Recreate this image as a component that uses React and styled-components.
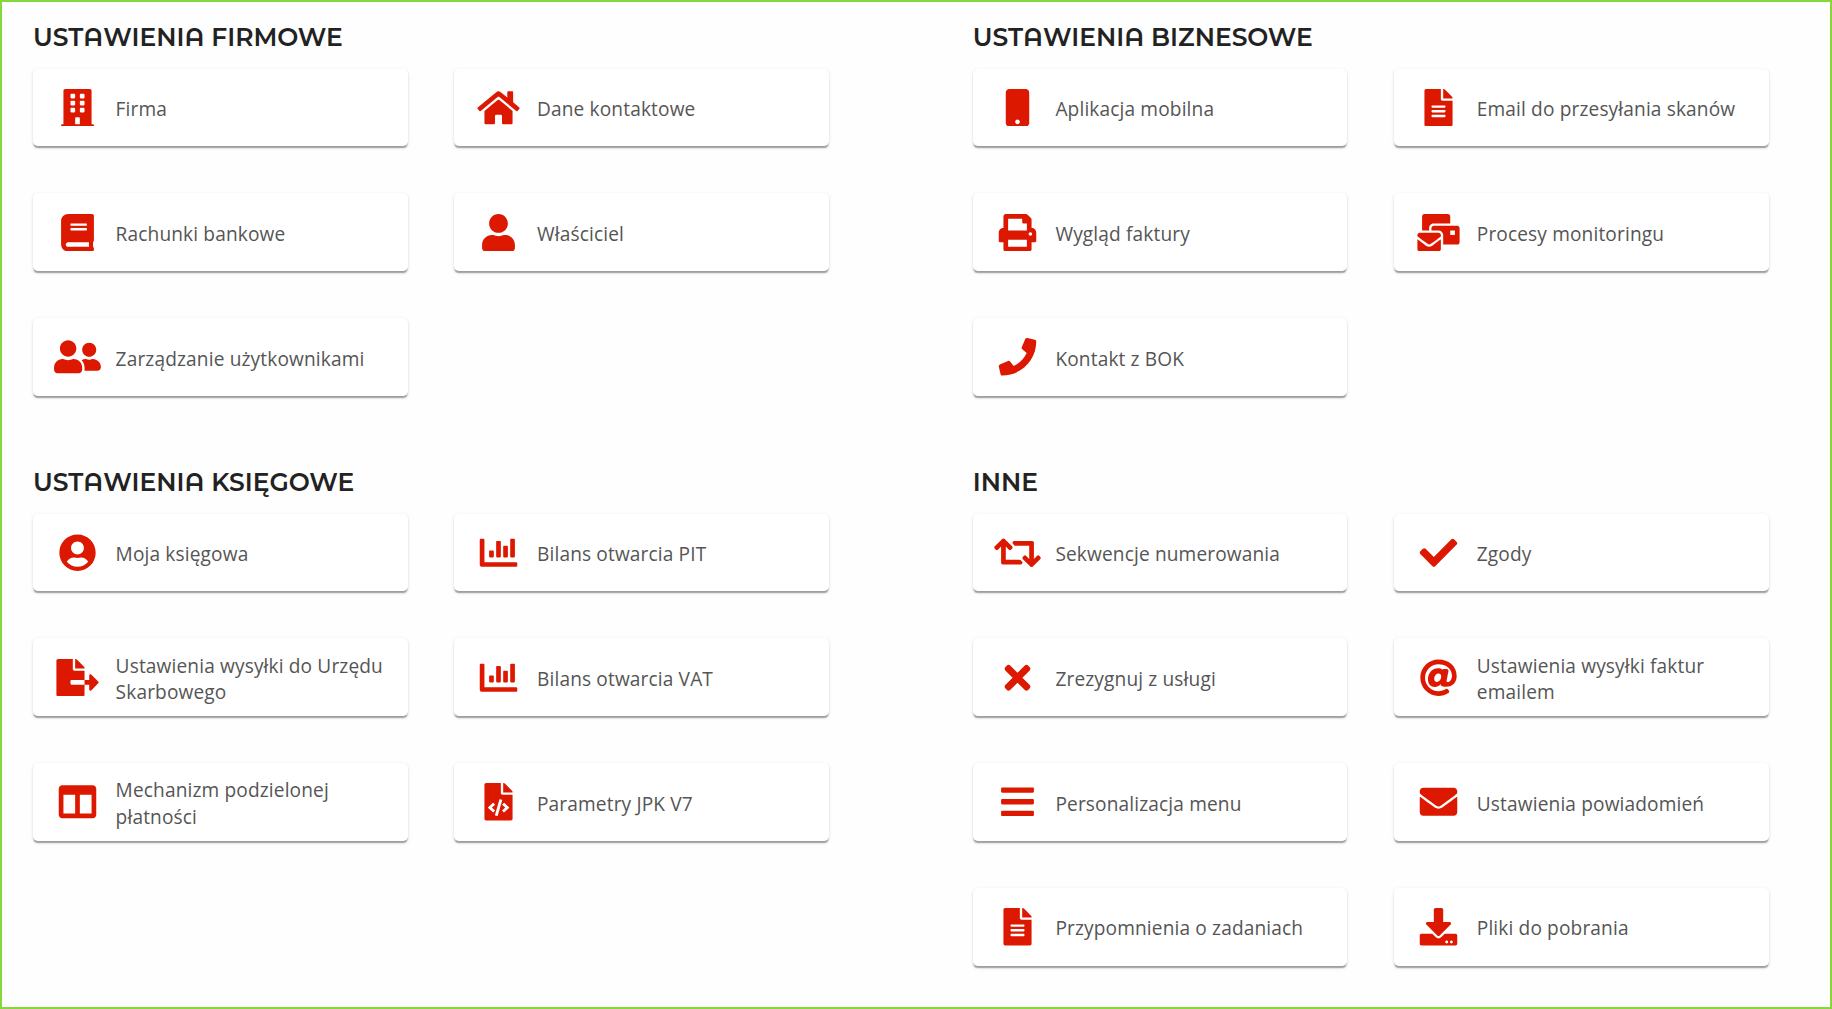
import { Fragment } from "react";
import styled, { createGlobalStyle } from "styled-components";
import {
  FaAt,
  FaBars,
  FaBook,
  FaBuilding,
  FaChartBar,
  FaCheck,
  FaColumns,
  FaDownload,
  FaEnvelope,
  FaFileAlt,
  FaFileCode,
  FaFileExport,
  FaHome,
  FaMailBulk,
  FaMobile,
  FaPhone,
  FaPrint,
  FaRetweet,
  FaTimes,
  FaUser,
  FaUserCircle,
  FaUserFriends,
} from "react-icons/fa";

const sections = [
  {
    title: "USTAWIENIA FIRMOWE",
    items: [
      { icon: FaBuilding, label: "Firma" },
      { icon: FaHome, label: "Dane kontaktowe" },
      { icon: FaBook, label: "Rachunki bankowe" },
      { icon: FaUser, label: "Właściciel" },
      { icon: FaUserFriends, label: "Zarządzanie użytkownikami" },
    ],
  },
  {
    title: "USTAWIENIA BIZNESOWE",
    items: [
      { icon: FaMobile, label: "Aplikacja mobilna" },
      { icon: FaFileAlt, label: "Email do przesyłania skanów" },
      { icon: FaPrint, label: "Wygląd faktury" },
      { icon: FaMailBulk, label: "Procesy monitoringu" },
      { icon: FaPhone, label: "Kontakt z BOK" },
    ],
  },
  {
    title: "USTAWIENIA KSIĘGOWE",
    items: [
      { icon: FaUserCircle, label: "Moja księgowa" },
      { icon: FaChartBar, label: "Bilans otwarcia PIT" },
      { icon: FaFileExport, label: "Ustawienia wysyłki do Urzędu Skarbowego" },
      { icon: FaChartBar, label: "Bilans otwarcia VAT" },
      { icon: FaColumns, label: "Mechanizm podzielonej płatności" },
      { icon: FaFileCode, label: "Parametry JPK V7" },
    ],
  },
  {
    title: "INNE",
    items: [
      { icon: FaRetweet, label: "Sekwencje numerowania" },
      { icon: FaCheck, label: "Zgody" },
      { icon: FaTimes, label: "Zrezygnuj z usługi" },
      { icon: FaAt, label: "Ustawienia wysyłki faktur emailem" },
      { icon: FaBars, label: "Personalizacja menu" },
      { icon: FaEnvelope, label: "Ustawienia powiadomień" },
      { icon: FaFileAlt, label: "Przypomnienia o zadaniach" },
      { icon: FaDownload, label: "Pliki do pobrania" },
    ],
  },
];

// the rounded A comes from the alternates cut
const SectionTitle = ({ text }) => (
  <Title>
    {text.split("A").map((part, i) => (
      <Fragment key={i}>
        {i > 0 && <AltLetter>A</AltLetter>}
        {part}
      </Fragment>
    ))}
  </Title>
);

const SettingsTile = ({ icon: Icon, label }) => (
  <Tile>
    <IconBox>
      <Icon />
    </IconBox>
    <Label>{label}</Label>
  </Tile>
);

export default function App() {
  return (
    <>
      <GlobalStyle />
      <Page>
        {sections.map((section) => (
          <section key={section.title}>
            <SectionTitle text={section.title} />
            <Tiles>
              {section.items.map((item) => (
                <SettingsTile key={item.label} {...item} />
              ))}
            </Tiles>
          </section>
        ))}
      </Page>
    </>
  );
}

const GlobalStyle = createGlobalStyle`
  * {
    box-sizing: border-box;
  }
  body {
    margin: 0;
    background: #fefefe;
    font-family: "Open Sans", "Noto Sans", sans-serif;
  }
`;

const Page = styled.main`
  display: grid;
  grid-template-columns: repeat(2, 796px);
  grid-template-rows: 445px auto;
  column-gap: 143.8px;
  align-content: start;
  height: 1009px;
  padding: 19px 0 0 31px;
  border: 2px solid #82d939;
  overflow: hidden;
`;

const Title = styled.h2`
  height: 33px;
  margin: 0 0 14.7px;
  color: #222;
  font-family: Montserrat, Lato, sans-serif;
  font-size: 25px;
  font-weight: 600;
  line-height: 33px;
  white-space: nowrap;
`;

const AltLetter = styled.span`
  font-family: "Montserrat Alternates", Montserrat, Lato, sans-serif;
`;

const Tiles = styled.div`
  display: grid;
  grid-template-columns: repeat(2, 374.6px);
  grid-auto-rows: 77.8px;
  gap: 47px 46.8px;
`;

const Tile = styled.div`
  display: flex;
  align-items: center;
  padding: 0 18px 0 21px;
  border-radius: 4.7px;
  background: #fff;
  box-shadow: 0 2.3px 1.2px -1.2px rgba(0, 0, 0, 0.2),
    0 1.2px 1.2px 0 rgba(0, 0, 0, 0.14), 0 1.2px 3.5px 0 rgba(0, 0, 0, 0.12);
`;

const IconBox = styled.div`
  display: flex;
  flex: 0 0 47px;
  margin-right: 14.6px;
  color: #dc1800;

  svg {
    width: 47px;
    height: 37.5px;
  }
`;

const Label = styled.span`
  padding-top: 3px;
  color: #555;
  font-size: 19.1px;
  line-height: 26.2px;
  letter-spacing: 0.14px;
`;
